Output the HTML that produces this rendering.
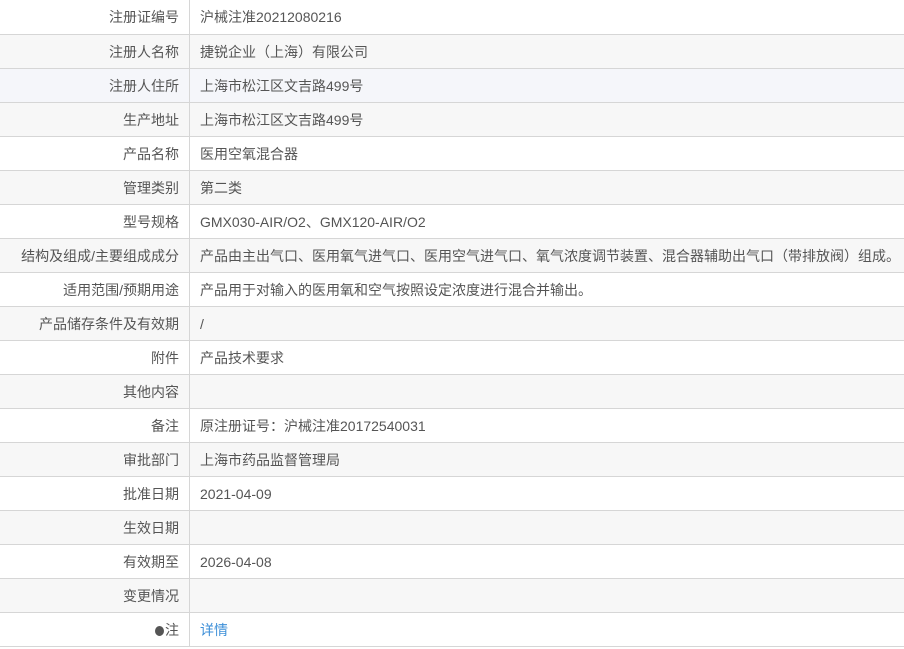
<!DOCTYPE html>
<html><head><meta charset="utf-8"><style>
html,body{margin:0;padding:0;background:#fff;width:904px;height:649px;overflow:hidden}
table{border-collapse:collapse;width:904px;font-family:"Liberation Sans","Noto Sans CJK SC",sans-serif;font-size:14px;color:#555}
td{height:33px;border-bottom:1px solid #d6d6d6;padding:0;white-space:nowrap}
tr:first-child td{height:34px}
td.l{width:179px;text-align:right;padding-right:10px;border-right:1px solid #d6d6d6}
td.v{padding-left:10px}
tr:nth-child(even){background:#f7f7f7}
tr.h{background:#f5f6fa}
a{color:#3d8fd8;text-decoration:none}
.dot{display:inline-block;width:9px;height:10px;border-radius:50%;background:#555;vertical-align:-1px;margin-right:1px}
</style></head><body>
<table>
<tr><td class="l">注册证编号</td><td class="v">沪械注准20212080216</td></tr>
<tr><td class="l">注册人名称</td><td class="v">捷锐企业（上海）有限公司</td></tr>
<tr class="h"><td class="l">注册人住所</td><td class="v">上海市松江区文吉路499号</td></tr>
<tr><td class="l">生产地址</td><td class="v">上海市松江区文吉路499号</td></tr>
<tr><td class="l">产品名称</td><td class="v">医用空氧混合器</td></tr>
<tr><td class="l">管理类别</td><td class="v">第二类</td></tr>
<tr><td class="l">型号规格</td><td class="v">GMX030-AIR/O2、GMX120-AIR/O2</td></tr>
<tr><td class="l">结构及组成/主要组成成分</td><td class="v">产品由主出气口、医用氧气进气口、医用空气进气口、氧气浓度调节装置、混合器辅助出气口（带排放阀）组成。</td></tr>
<tr><td class="l">适用范围/预期用途</td><td class="v">产品用于对输入的医用氧和空气按照设定浓度进行混合并输出。</td></tr>
<tr><td class="l">产品储存条件及有效期</td><td class="v">/</td></tr>
<tr><td class="l">附件</td><td class="v">产品技术要求</td></tr>
<tr><td class="l">其他内容</td><td class="v"></td></tr>
<tr><td class="l">备注</td><td class="v">原注册证号：沪械注准20172540031</td></tr>
<tr><td class="l">审批部门</td><td class="v">上海市药品监督管理局</td></tr>
<tr><td class="l">批准日期</td><td class="v">2021-04-09</td></tr>
<tr><td class="l">生效日期</td><td class="v"></td></tr>
<tr><td class="l">有效期至</td><td class="v">2026-04-08</td></tr>
<tr><td class="l">变更情况</td><td class="v"></td></tr>
<tr><td class="l"><span class="dot"></span>注</td><td class="v"><a>详情</a></td></tr>
</table>
</body></html>
